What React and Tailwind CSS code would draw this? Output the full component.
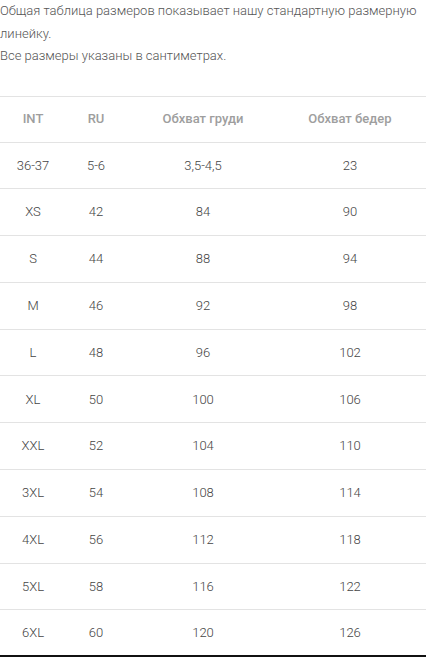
const rows = [
  ["36-37", "5-6", "3,5-4,5", "23"],
  ["XS", "42", "84", "90"],
  ["S", "44", "88", "94"],
  ["M", "46", "92", "98"],
  ["L", "48", "96", "102"],
  ["XL", "50", "100", "106"],
  ["XXL", "52", "104", "110"],
  ["3XL", "54", "108", "114"],
  ["4XL", "56", "112", "118"],
  ["5XL", "58", "116", "122"],
  ["6XL", "60", "120", "126"],
];

const cols = ["w-[66px]", "w-[60px]", "w-[154px]", "w-[140px]"];

export default function App() {
  return (
    <div className="w-[432px] h-[664px] overflow-hidden bg-white font-['Roboto',sans-serif] text-[#555]">
      <div className="text-[13px] font-light leading-[22.5px] pr-2">
        <p>Общая таблица размеров показывает нашу стандартную размерную линейку.</p>
        <p>Все размеры указаны в сантиметрах.</p>
      </div>

      <div className="mt-[28px] w-[426px] border-t border-[#e3e3e3]">
        <div className="flex h-[46px] items-center border-b border-[#e3e3e3] text-[13px] font-medium text-[#9e9e9e]">
          <div className={`${cols[0]} text-center`}>INT</div>
          <div className={`${cols[1]} text-center`}>RU</div>
          <div className={`${cols[2]} text-center`}>Обхват груди</div>
          <div className={`${cols[3]} text-center`}>Обхват бедер</div>
        </div>
        {rows.map((r, i) => (
          <div
            key={r[0]}
            className={`flex h-[46.8px] items-center text-[13px] font-light text-[#444] ${
              i === rows.length - 1 ? "border-b-2 border-[#111]" : "border-b border-[#e3e3e3]"
            }`}
          >
            {r.map((c, j) => (
              <div key={j} className={`${cols[j]} text-center`}>
                {c}
              </div>
            ))}
          </div>
        ))}
      </div>
    </div>
  );
}
